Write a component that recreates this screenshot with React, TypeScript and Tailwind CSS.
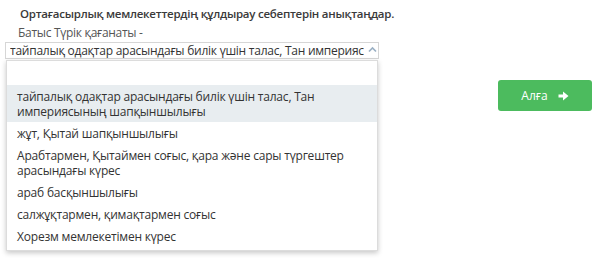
import React from "react";

const options: string[] = [
  "тайпалық одақтар арасындағы билік үшін талас, Тан империясының шапқыншылығы",
  "жұт, Қытай шапқыншылығы",
  "Арабтармен, Қытаймен соғыс, қара және сары түргештер арасындағы күрес",
  "араб басқыншылығы",
  "салжұқтармен, қимақтармен соғыс",
  "Хорезм мемлекетімен күрес",
];

export default function App() {
  return (
    <div
      className="w-[597px] h-[263px] bg-white relative overflow-hidden text-[#333]"
      style={{ fontFamily: '"Open Sans", "Noto Sans", sans-serif' }}
    >
      <div className="flex">
        <div className="w-[380px] pl-[5px] pt-[6px]">
          <div className="pl-[15px] text-[11.5px] font-semibold tracking-[-0.25px] leading-[16px] text-[#3a3a3a] whitespace-nowrap">
            Ортағасырлық мемлекеттердің құлдырау себептерін анықтаңдар.
          </div>
          <div className="pl-[13px] mt-[3px] text-[12px] tracking-[-0.3px] leading-[15px] text-[#555]">
            Батыс Түрік қағанаты -
          </div>
          <div className="relative">
            <div className="mt-[2px] w-[374px] h-[17px] border border-[#d6d6d6] flex items-center pl-[4px] pr-[14px] overflow-hidden">
              <span className="whitespace-nowrap overflow-hidden text-[12px] tracking-[-0.25px] leading-[15px] text-[#333]">
                тайпалық одақтар арасындағы билік үшін талас, Тан империясының шапқыншылығы
              </span>
            </div>
            <svg
              className="absolute right-[3px] top-[4px]"
              width="9"
              height="7"
              viewBox="0 0 9 7"
            >
              <path d="M1 5.5 L4.5 2 L8 5.5" fill="none" stroke="#9bb0c4" strokeWidth="1.7" />
            </svg>
            <div className="absolute left-[1px] top-[18px] w-[372px] bg-white border border-[#dcdcdc] shadow-[0_2px_5px_rgba(0,0,0,0.22)] pb-[3px]">
              <div className="h-[24px]" />
              {options.map((o, i) => (
                <div
                  key={i}
                  className={`px-[10px] py-[3.5px] text-[12px] tracking-[-0.2px] leading-[15px] text-[#333] ${
                    i === 0 ? "bg-[#e8edf0]" : ""
                  }`}
                >
                  {o}
                </div>
              ))}
            </div>
          </div>
        </div>
        <div className="flex-1 flex justify-end pr-[5px] pt-[80px]">
          <button className="w-[94px] h-[31px] rounded-[3px] bg-[#4cbb5e] text-white text-[12px] flex items-center justify-center gap-[10px]">
            <span>Алға</span>
            <svg width="11" height="10" viewBox="0 0 11 10">
              <path d="M0.5 3.5 H5 V0.5 L10.5 5 L5 9.5 V6.5 H0.5 Z" fill="white" />
            </svg>
          </button>
        </div>
      </div>
    </div>
  );
}
